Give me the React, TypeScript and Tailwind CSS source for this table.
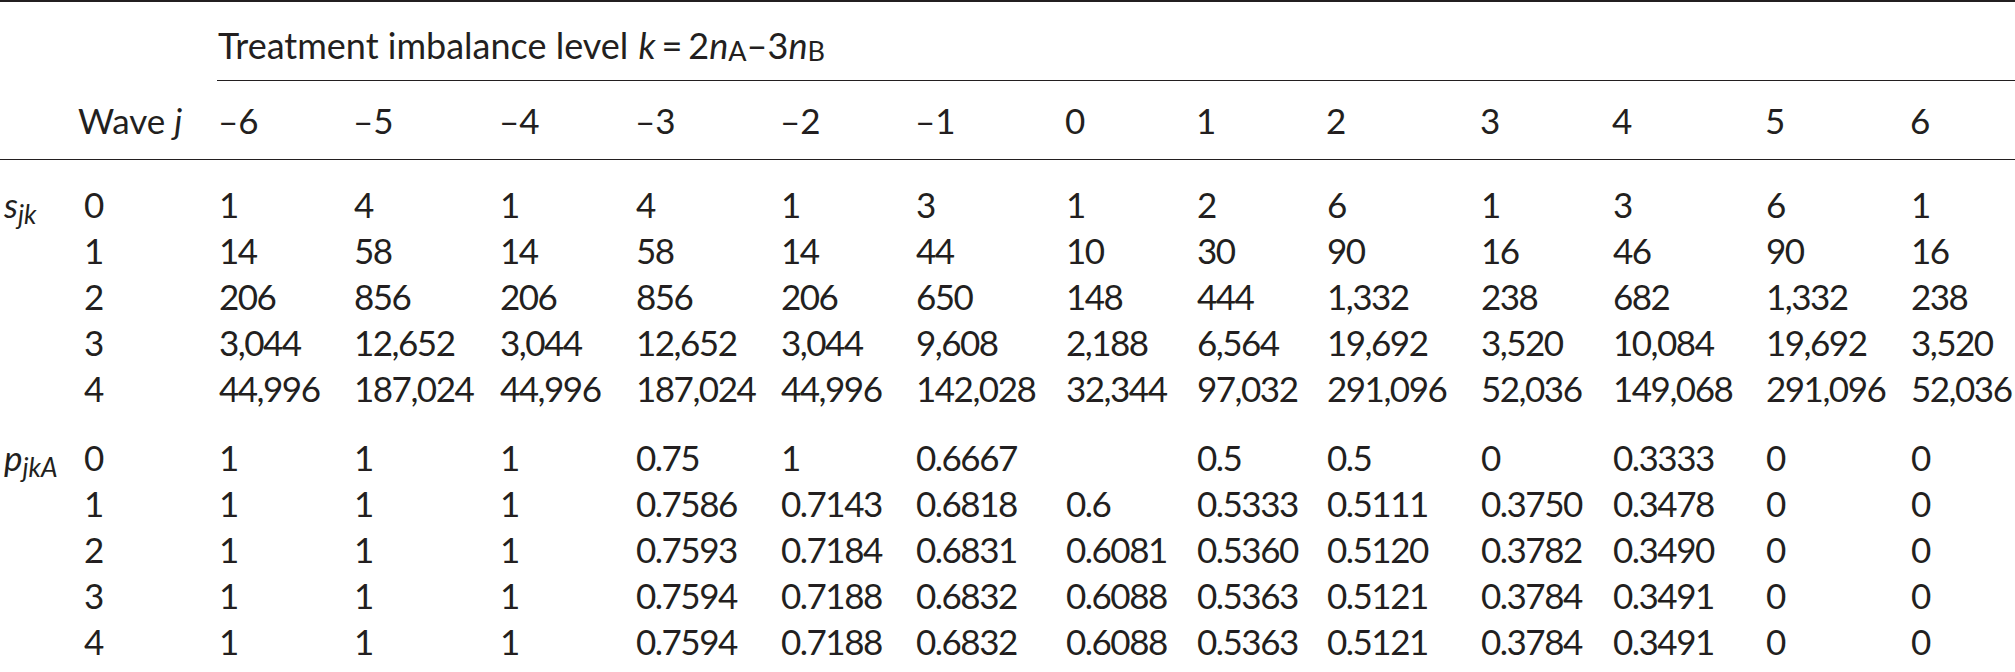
import React from "react";

const COLS =
  "grid grid-cols-[80px_137px_135px_146px_136px_145px_135px_150px_131px_130px_154px_132px_153px_145px_106px]";

const heads = ["–6", "–5", "–4", "–3", "–2", "–1", "0", "1", "2", "3", "4", "5", "6"];

const sRows: string[][] = [
  ["1", "4", "1", "4", "1", "3", "1", "2", "6", "1", "3", "6", "1"],
  ["14", "58", "14", "58", "14", "44", "10", "30", "90", "16", "46", "90", "16"],
  ["206", "856", "206", "856", "206", "650", "148", "444", "1,332", "238", "682", "1,332", "238"],
  ["3,044", "12,652", "3,044", "12,652", "3,044", "9,608", "2,188", "6,564", "19,692", "3,520", "10,084", "19,692", "3,520"],
  ["44,996", "187,024", "44,996", "187,024", "44,996", "142,028", "32,344", "97,032", "291,096", "52,036", "149,068", "291,096", "52,036"],
];

const pRows: string[][] = [
  ["1", "1", "1", "0.75", "1", "0.6667", "", "0.5", "0.5", "0", "0.3333", "0", "0"],
  ["1", "1", "1", "0.7586", "0.7143", "0.6818", "0.6", "0.5333", "0.5111", "0.3750", "0.3478", "0", "0"],
  ["1", "1", "1", "0.7593", "0.7184", "0.6831", "0.6081", "0.5360", "0.5120", "0.3782", "0.3490", "0", "0"],
  ["1", "1", "1", "0.7594", "0.7188", "0.6832", "0.6088", "0.5363", "0.5121", "0.3784", "0.3491", "0", "0"],
  ["1", "1", "1", "0.7594", "0.7188", "0.6832", "0.6088", "0.5363", "0.5121", "0.3784", "0.3491", "0", "0"],
];

function Row({ label, index, values }: { label?: React.ReactNode; index: string; values: string[] }) {
  return (
    <div className={COLS + " h-[46px] items-center"}>
      <div className="pl-[4px] whitespace-nowrap">{label}</div>
      <div className="pl-[4px]">{index}</div>
      {values.map((v, i) => (
        <div key={i} className="pl-[2px] whitespace-nowrap tracking-[-1.5px]">
          {v}
        </div>
      ))}
    </div>
  );
}

export default function App() {
  const sLabel = (
    <span>
      <i>s</i>
      <sub className="italic">jk</sub>
    </span>
  );
  const pLabel = (
    <span>
      <i>p</i>
      <sub className="italic">jkA</sub>
    </span>
  );
  return (
    <div className="w-[2015px] h-[672px] overflow-hidden bg-white text-[#231f20] font-['Lato',sans-serif] text-[35px] leading-none">
      <div className="border-t-2 border-[#231f20]" />
      <div className={COLS + " h-[79px]"}>
        <div className="col-start-3 col-end-16 flex items-center pt-[7px] pl-px border-b-[1.5px] border-[#231f20] whitespace-nowrap text-[36px]">
          <span>Treatment imbalance level</span>
          <i className="ml-[10px]">k</i>
          <span className="mx-[6px]">=</span>2<i>n</i>
          <sub>A</sub>–3<i>n</i>
          <sub>B</sub>
        </div>
      </div>
      <div className={COLS + " h-[79px] items-center border-b-[1.5px] border-[#231f20]"}>
        <div />
        <div className="whitespace-nowrap -ml-[2px]">
          Wave <i>j</i>
        </div>
        {heads.map((h, i) => (
          <div key={i} className="pl-[1px]">
            {h}
          </div>
        ))}
      </div>
      <div className="pt-[21px]">
        {sRows.map((r, i) => (
          <Row key={i} label={i === 0 ? sLabel : undefined} index={String(i)} values={r} />
        ))}
      </div>
      <div className="pt-[23px]">
        {pRows.map((r, i) => (
          <Row key={i} label={i === 0 ? pLabel : undefined} index={String(i)} values={r} />
        ))}
      </div>
    </div>
  );
}
